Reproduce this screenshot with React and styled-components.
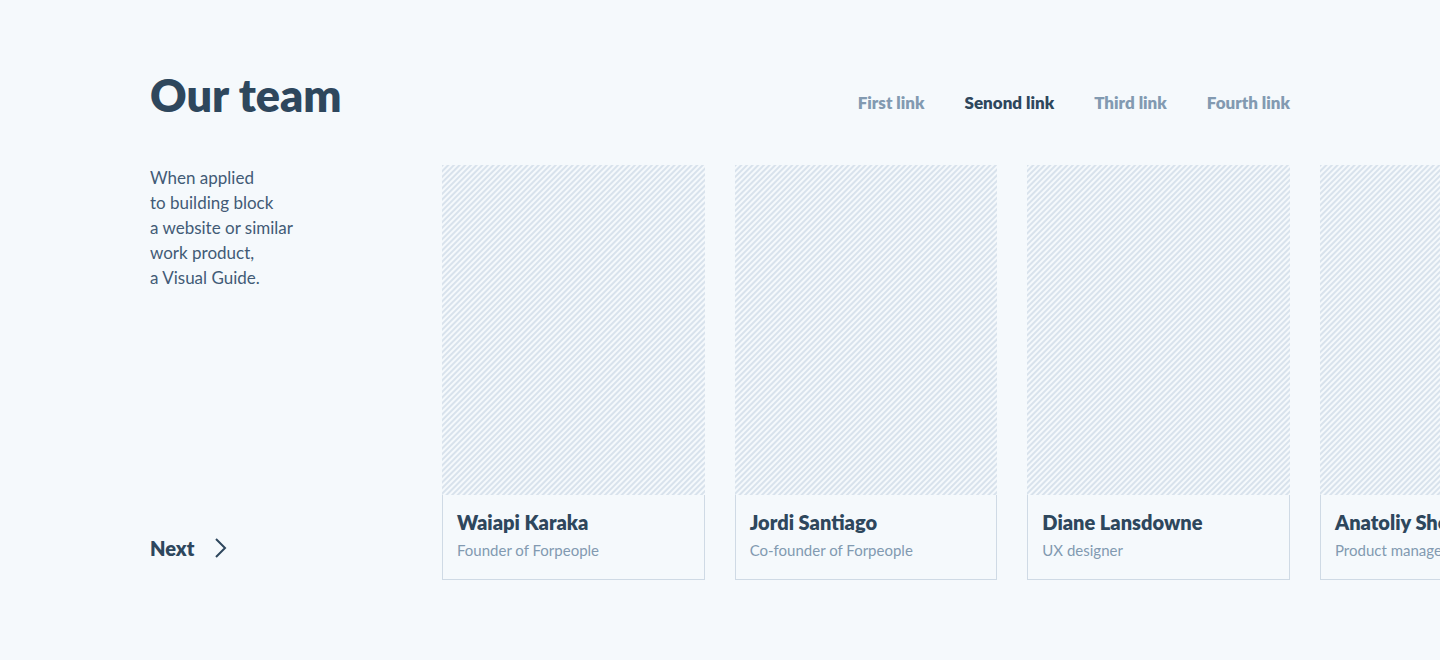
import React from "react";
import styled, { createGlobalStyle } from "styled-components";

const ink = "#2e475d";
const muted = "#829ab1";
const page = "#f5f9fc";
const hatch = "#d8e2ec";

const GlobalStyle = createGlobalStyle`
  *, *::before, *::after { box-sizing: border-box; }
  body {
    margin: 0;
    background: ${page};
    color: ${ink};
    font-family: Lato, "Liberation Sans", sans-serif;
    overflow-x: hidden;
  }
`;

const Section = styled.section`
  max-width: 1200px;
  margin: 0 auto;
  padding: 64px 30px 80px;
`;

const Header = styled.header`
  display: flex;
  justify-content: space-between;
  align-items: center;
  margin-bottom: 39px;
`;

const Title = styled.h2`
  margin: 0;
  font-size: 45px;
  line-height: 62px;
  font-weight: 800;
`;

const Nav = styled.nav`
  display: flex;
  gap: 40px;
  padding-top: 16px;
`;

const NavLink = styled.a`
  color: ${({ $active }) => ($active ? ink : muted)};
  font-size: 17px;
  line-height: 24px;
  font-weight: 800;
  text-decoration: none;
`;

const Content = styled.div`
  display: grid;
  grid-template-columns: 262px minmax(0, 1fr);
  column-gap: 30px;
`;

const Aside = styled.div`
  display: flex;
  flex-direction: column;
  justify-content: space-between;
  align-items: flex-start;
  padding-bottom: 17px;
`;

const Intro = styled.p`
  margin: 0;
  font-size: 17px;
  line-height: 25px;
  color: #425b76;
`;

const NextButton = styled.button`
  display: flex;
  align-items: center;
  gap: 20px;
  padding: 0;
  border: 0;
  background: none;
  color: ${ink};
  font-family: inherit;
  font-size: 20px;
  line-height: 30px;
  font-weight: 800;
  cursor: pointer;
`;

const Track = styled.ul`
  display: grid;
  grid-auto-flow: column;
  grid-auto-columns: calc((100% - 60px) / 3);
  column-gap: 30px;
  margin: 0;
  padding: 0;
  list-style: none;
`;

const Card = styled.li`
  display: flex;
  flex-direction: column;
`;

const Photo = styled.div`
  height: 330px;
  background: repeating-linear-gradient(
    135deg,
    ${hatch} 0 1px,
    ${page} 2px 3px,
    ${hatch} 4px
  );
`;

const Caption = styled.div`
  padding: 12px 14px 16px;
  border: 1px solid #cfdae5;
  border-top: 0;
  white-space: nowrap;
`;

const Name = styled.h3`
  margin: 0 0 1px;
  font-size: 20px;
  line-height: 30px;
  font-weight: 800;
`;

const Role = styled.p`
  margin: 0;
  color: ${muted};
  font-size: 15px;
  line-height: 25px;
`;

const links = ["First link", "Senond link", "Third link", "Fourth link"];

const people = [
  { name: "Waiapi Karaka", role: "Founder of Forpeople" },
  { name: "Jordi Santiago", role: "Co-founder of Forpeople" },
  { name: "Diane Lansdowne", role: "UX designer" },
  { name: "Anatoliy Shevchenko", role: "Product manager" },
];

const Chevron = () => (
  <svg width="14" height="20" viewBox="0 0 14 20" fill="none" aria-hidden="true">
    <path d="M2 1 11 10 2 19" stroke="currentColor" strokeWidth="2" />
  </svg>
);

export default function App() {
  return (
    <>
      <GlobalStyle />
      <Section>
        <Header>
          <Title>Our team</Title>
          <Nav>
            {links.map((label, i) => (
              <NavLink key={label} href="#" $active={i === 1}>
                {label}
              </NavLink>
            ))}
          </Nav>
        </Header>
        <Content>
          <Aside>
            <Intro>
              When applied
              <br />
              to building block
              <br />
              a website or similar
              <br />
              work product,
              <br />
              a Visual Guide.
            </Intro>
            <NextButton type="button">
              Next
              <Chevron />
            </NextButton>
          </Aside>
          <Track>
            {people.map(({ name, role }) => (
              <Card key={name}>
                <Photo />
                <Caption>
                  <Name>{name}</Name>
                  <Role>{role}</Role>
                </Caption>
              </Card>
            ))}
          </Track>
        </Content>
      </Section>
    </>
  );
}
